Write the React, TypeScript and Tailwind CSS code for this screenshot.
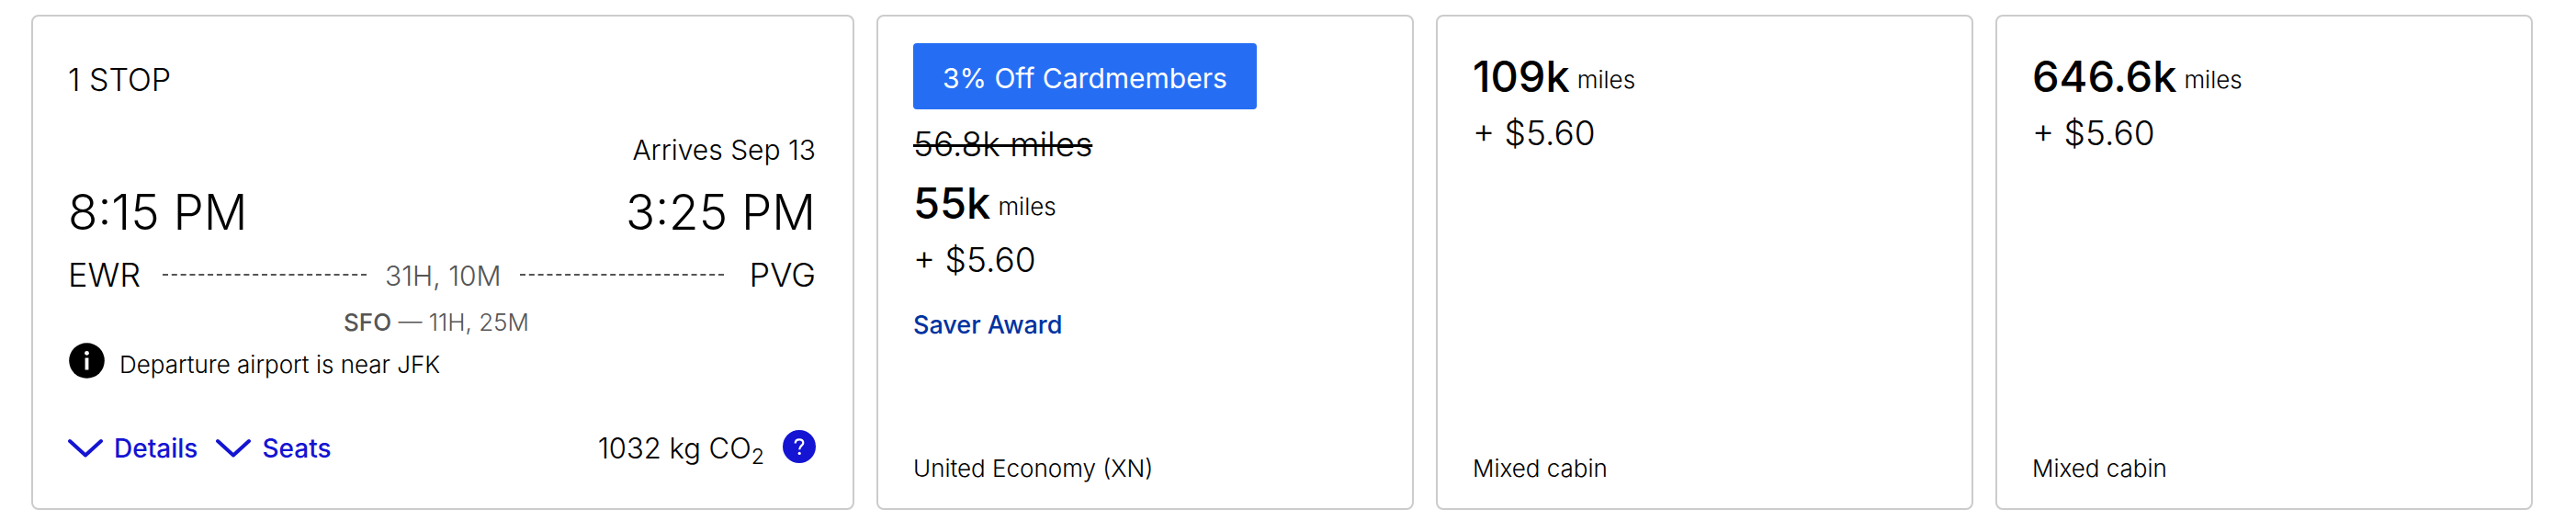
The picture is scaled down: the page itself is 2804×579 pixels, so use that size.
import React from 'react';

interface Fare {
  id: string;
  badge?: string;
  oldMiles?: string;
  miles: string;
  price: string;
  award?: string;
  cabin: string;
}

const fares: Fare[] = [
  {
    id: 'economy',
    badge: '3% Off Cardmembers',
    oldMiles: '56.8k miles',
    miles: '55k',
    price: '$5.60',
    award: 'Saver Award',
    cabin: 'United Economy (XN)',
  },
  { id: 'premium', miles: '109k', price: '$5.60', cabin: 'Mixed cabin' },
  { id: 'business', miles: '646.6k', price: '$5.60', cabin: 'Mixed cabin' },
];

const ChevronDown = () => (
  <svg viewBox="0 0 38 22" className="h-[22px] w-[38px]" fill="none" aria-hidden="true">
    <path d="M2 3 L19 18.5 L36 3" stroke="currentColor" strokeWidth="4" strokeLinecap="round" strokeLinejoin="round" />
  </svg>
);

const InfoIcon = () => (
  <svg viewBox="0 0 40 40" className="size-10 shrink-0" aria-hidden="true">
    <circle cx="20.5" cy="19.5" r="19.3" fill="#000" />
    <circle cx="20.5" cy="11.3" r="2.4" fill="#fff" />
    <rect x="18.6" y="16.5" width="3.8" height="13" fill="#fff" />
  </svg>
);

const HelpIcon = () => (
  <svg viewBox="0 0 36 36" className="size-9" fill="none" aria-hidden="true">
    <circle cx="18" cy="18" r="18" fill="#1414d2" />
    <path d="M13.7 14.6 C13.7 11.8 15.4 10.3 18.1 10.3 C20.8 10.3 22.3 11.8 22.3 13.9 C22.3 17 18.2 17 18.2 21.3" stroke="#fff" strokeWidth="2.2" />
    <circle cx="18.2" cy="25.4" r="1.6" fill="#fff" />
  </svg>
);

const FlightCard = () => (
  <section className="rounded-lg border-2 border-[#ccc] pt-[47px] pr-10 pb-[45px] pl-[38px]">
    <p className="text-[34px] leading-[44px]">1 STOP</p>
    <p className="mt-[34px] text-right text-[30px] leading-10">Arrives Sep 13</p>
    <div className="mt-4 flex justify-between text-[53px] leading-[64px]">
      <span>8:15 PM</span>
      <span>3:25 PM</span>
    </div>
    <div className="mt-3.5 flex items-center text-[36px] leading-[44px]">
      <span>EWR</span>
      <span className="ml-6 flex-1 border-t-2 border-dashed border-[#555]" />
      <span className="mx-5 pt-0.5 text-[30px] leading-[42px] text-[#555]">31H, 10M</span>
      <span className="mr-7 flex-1 border-t-2 border-dashed border-[#555]" />
      <span>PVG</span>
    </div>
    <p className="mt-3 pr-3 text-center text-[26px] leading-9 text-[#555]">
      <span className="font-medium">SFO</span> — 11H, 25M
    </p>
    <div className="mt-1 flex h-[41px] gap-4">
      <InfoIcon />
      <p className="pt-1.5 text-[26px] leading-9">Departure airport is near JFK</p>
    </div>
    <div className="mt-[54px] flex items-start justify-between">
      <div className="flex gap-5 text-[28px] leading-10 font-medium text-[#1414d2]">
        <button type="button" className="flex items-center gap-3">
          <ChevronDown />
          Details
        </button>
        <button type="button" className="flex items-center gap-3">
          <ChevronDown />
          Seats
        </button>
      </div>
      <div className="flex items-start gap-5 text-[31px] leading-10">
        <span>
          1032 kg CO<sub>2</sub>
        </span>
        <button type="button" aria-label="About carbon emissions">
          <HelpIcon />
        </button>
      </div>
    </div>
  </section>
);

const FareCard: React.FC<{ fare: Fare }> = ({ fare }) => (
  <section className={`flex flex-col items-start rounded-lg border-2 border-[#ccc] px-[38px] pb-[25px] ${fare.badge ? 'pt-[29px]' : 'pt-[37px]'}`}>
    {fare.badge && (
      <p className="rounded bg-[#256ef4] px-8 pt-4.5 pb-3.5 text-[30px] leading-10 font-normal text-white">{fare.badge}</p>
    )}
    {fare.oldMiles && (
      <del className="mt-4 mb-3.5 text-[37px] leading-[44px] decoration-[3px]">{fare.oldMiles}</del>
    )}
    <p className="flex items-end gap-2">
      <span className="text-[47px] leading-[56px] font-medium">{fare.miles}</span>
      <span className="text-[26px] leading-[48px]">miles</span>
    </p>
    <p className="mt-3 text-[37px] leading-[44px]">+ {fare.price}</p>
    {fare.award && <p className="mt-[31px] text-[27px] leading-9 font-medium text-[#0033a0]">{fare.award}</p>}
    <p className="mt-auto text-[26px] leading-9">{fare.cabin}</p>
  </section>
);

export default function App() {
  return (
    <main className="grid grid-cols-[896fr_585fr_585fr_585fr] gap-6 bg-white pt-4 pr-[47px] pb-6 pl-[34px] font-['Inter',sans-serif] font-light text-black">
      <FlightCard />
      {fares.map((fare) => (
        <FareCard key={fare.id} fare={fare} />
      ))}
    </main>
  );
}
